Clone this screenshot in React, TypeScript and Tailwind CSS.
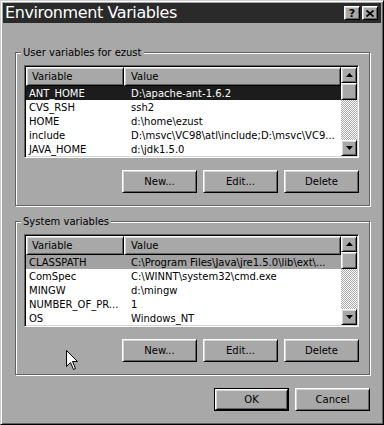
const userVars: [string, string][] = [
  ['ANT_HOME', 'D:\\apache-ant-1.6.2'],
  ['CVS_RSH', 'ssh2'],
  ['HOME', 'd:\\home\\ezust'],
  ['include', 'D:\\msvc\\VC98\\atl\\include;D:\\msvc\\VC9...'],
  ['JAVA_HOME', 'd:\\jdk1.5.0'],
]

const systemVars: [string, string][] = [
  ['CLASSPATH', 'C:\\Program Files\\Java\\jre1.5.0\\lib\\ext\\...'],
  ['ComSpec', 'C:\\WINNT\\system32\\cmd.exe'],
  ['MINGW', 'd:\\mingw'],
  ['NUMBER_OF_PR...', '1'],
  ['OS', 'Windows_NT'],
]

// classic 3d bevels
const raised =
  'border border-t-white border-l-white border-r-black border-b-black shadow-[inset_1px_1px_0_#d6d6d6,inset_-1px_-1px_0_#626262]'

function Arrow({ down }: { down?: boolean }) {
  return (
    <svg width="7" height="4" viewBox="0 0 7 4">
      {down ? <path d="M0 0h7L3.5 4z" fill="#000" /> : <path d="M0 4h7L3.5 0z" fill="#000" />}
    </svg>
  )
}

function ScrollBar() {
  return (
    <div className="w-[16px] flex flex-col">
      <div className={`h-[16px] bg-[#a8a8a8] flex items-center justify-center ${raised}`}>
        <Arrow />
      </div>
      <div className={`h-[17px] bg-[#a8a8a8] ${raised}`} />
      <div className="flex-1 bg-[image:repeating-conic-gradient(#ffffff_0_25%,#a8a8a8_0_50%)] bg-[length:2px_2px]" />
      <div className={`h-[16px] bg-[#a8a8a8] flex items-center justify-center ${raised}`}>
        <Arrow down />
      </div>
    </div>
  )
}

function VarList({ rows, active }: { rows: [string, string][]; active: boolean }) {
  return (
    <div className="h-[93px] p-[1px] bg-white flex border border-t-[#626262] border-l-[#626262] border-r-white border-b-white shadow-[inset_1px_1px_0_#000,inset_-1px_-1px_0_#d6d6d6]">
      <div className="flex-1 flex flex-col min-w-0">
        <div className="flex h-[19px] bg-[#a8a8a8]">
          <div className={`w-[98px] pl-[5px] flex items-center ${raised}`}>Variable</div>
          <div className={`flex-1 pl-[6px] flex items-center ${raised}`}>Value</div>
        </div>
        {rows.map(([name, value], i) => {
          const sel = i === 0
          const rowCls = sel ? (active ? 'bg-[#1c1c1c] text-white' : 'bg-[#a2a2a2] text-black') : 'text-black'
          return (
            <div key={name} className={`flex h-[14px] items-center whitespace-nowrap ${rowCls}`}>
              <div className="w-[98px] pl-[3px] overflow-hidden">{name}</div>
              <div className="flex-1 pl-[7px] overflow-hidden">{value}</div>
            </div>
          )
        })}
      </div>
      <ScrollBar />
    </div>
  )
}

function Button({ label, def }: { label: string; def?: boolean }) {
  if (def) {
    return (
      <div className="w-[75px] h-[23px] border border-black">
        <div className={`h-full bg-[#a8a8a8] flex items-center justify-center ${raised}`}>{label}</div>
      </div>
    )
  }
  return (
    <div className={`w-[75px] h-[23px] bg-[#a8a8a8] flex items-center justify-center ${raised}`}>{label}</div>
  )
}

function Group({ label, rows, active, className = '' }: { label: string; rows: [string, string][]; active: boolean; className?: string }) {
  return (
    <div className={`relative border border-[#626262] shadow-[inset_1px_1px_0_#fff,1px_1px_0_#fff] pl-[8px] pr-[10px] pt-[12px] pb-[12px] ${className}`}>
      <span className="absolute left-[5px] -top-[7px] bg-[#a8a8a8] px-[2px] leading-[13px]">{label}</span>
      <VarList rows={rows} active={active} />
      <div className="mt-[12px] flex justify-end gap-[6px]">
        <Button label="New..." />
        <Button label="Edit..." />
        <Button label="Delete" />
      </div>
    </div>
  )
}

export default function App() {
  return (
    <div className="relative w-[384px] h-[425px] overflow-hidden bg-[#a8a8a8] text-[10px] text-black font-['DejaVu_Sans','Liberation_Sans',sans-serif]">
      <div className="h-full flex flex-col p-[2px] border border-t-[#cfcfcf] border-l-[#cfcfcf] border-r-black border-b-black shadow-[inset_1px_1px_0_#fff,inset_-1px_-1px_0_#626262]">
        <div className="h-[20px] bg-[#2a2a2a] flex items-center pl-[2px] pr-[3px]">
          <span className="flex-1 text-white text-[16px] tracking-[-0.4px] leading-[20px] whitespace-nowrap">Environment Variables</span>
          <div className="flex gap-[2px]">
            <div className={`w-[16px] h-[14px] bg-[#a8a8a8] flex items-center justify-center font-bold text-[11px] leading-none ${raised}`}>?</div>
            <div className={`w-[16px] h-[14px] bg-[#a8a8a8] flex items-center justify-center ${raised}`}>
              <svg width="8" height="7" viewBox="0 0 8 7">
                <path d="M0.5 0.5L7.5 6.5M7.5 0.5L0.5 6.5" stroke="#000" strokeWidth="1.8" />
              </svg>
            </div>
          </div>
        </div>

        <div className="flex flex-col pl-[12px] pr-[11px] pt-[29px]">
          <Group label="User variables for ezust" rows={userVars} active />
          <Group label="System variables" rows={systemVars} active={false} className="mt-[15px]" />
          <div className="mt-[13px] flex justify-end gap-[6px]">
            <Button label="OK" def />
            <Button label="Cancel" />
          </div>
        </div>
      </div>

      {/* mouse pointer */}
      <svg className="absolute left-[66px] top-[350px]" width="12" height="21" viewBox="0 0 12 21">
        <path d="M0.5 0.5V16.5L4.5 12.5L7.5 19.5L9.5 18.5L6.5 11.5H11.5Z" fill="#fff" stroke="#000" strokeWidth="1" />
      </svg>
    </div>
  )
}
